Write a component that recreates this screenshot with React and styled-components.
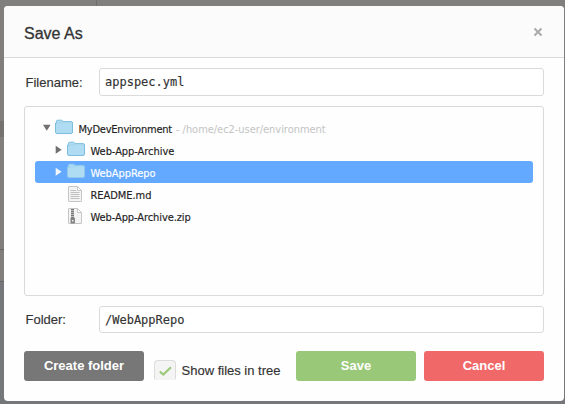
import React from 'react';
import styled, { createGlobalStyle } from 'styled-components';

const GlobalStyle = createGlobalStyle`
  * { box-sizing: border-box; }
  body { margin: 0; overflow: hidden; font-family: "Liberation Sans", Arial, sans-serif; color: #333; }
`;

const Backdrop = styled.div`
  width: 565px;
  height: 404px;
  padding: 6px 1px 3px 4px;
  background:
    linear-gradient(#6e6e6e, #6e6e6e) 96px 0 / 1px 6px no-repeat,
    linear-gradient(#757371, #757371) 0 121px / 4px 16px no-repeat,
    linear-gradient(#656565, #656565) 0 249px / 4px 1px no-repeat,
    linear-gradient(#656565, #656565) 0 281px / 4px 1px no-repeat,
    linear-gradient(#807f7e 0 281px, #75777b 281px);
`;

const Dialog = styled.section`
  display: flex;
  flex-direction: column;
  height: 395px;
  background: #fefefe;
  border-radius: 4px;
  overflow: hidden;
`;

const Header = styled.header`
  display: flex;
  align-items: center;
  justify-content: space-between;
  height: 52px;
  padding: 2px 21px 0 20px;
  background: #fbfbfb;
  border-bottom: 1px solid #dadada;
`;

const Title = styled.h1`
  margin: 0;
  padding-top: 2px;
  font-size: 16px;
  line-height: 20px;
  font-weight: 400;
  letter-spacing: 0;
  -webkit-text-stroke: 0.3px #333;
`;

const CloseButton = styled.button`
  display: flex;
  padding: 0;
  margin-top: -1px;
  border: 0;
  background: none;
`;

const Body = styled.div`
  display: flex;
  flex-direction: column;
  gap: 10px;
  padding: 10px 20px 0;
`;

const Field = styled.label`
  display: grid;
  grid-template-columns: 73.5px 445px;
  align-items: center;
  height: ${(p) => p.$height}px;
  padding-left: 1.5px;
  font-size: 13px;
  white-space: nowrap;
  -webkit-text-stroke: 0.15px #333;
`;

const Input = styled.input`
  width: 445px;
  height: 100%;
  padding: 0 5px;
  border: 1px solid #dadada;
  border-radius: 3px;
  outline: 0;
  background: #fff;
  color: #333;
  font: 12px "DejaVu Sans Mono", monospace;
`;

const Tree = styled.div`
  height: 190px;
  padding: 10px;
  border: 1px solid #dadada;
  border-radius: 3px;
  font: 11px/22px "DejaVu Sans Condensed", "DejaVu Sans", sans-serif;
  font-stretch: condensed;
`;

const TreeRow = styled.div`
  display: flex;
  align-items: center;
  height: 22px;
  padding-left: ${(p) => (p.$nested ? 19 : 7)}px;
  border-radius: 3px;
  background: ${(p) => (p.$selected ? '#63a9ff' : 'transparent')};
  color: ${(p) => (p.$selected ? '#fff' : '#222')};
`;

const ArrowSlot = styled.span`
  display: flex;
  width: 13px;
  height: 22px;
  padding-top: 6px;
  color: ${(p) => (p.$selected ? '#f4f7fb' : '#707070')};
`;

const IconSlot = styled.span`
  display: flex;
  width: 23px;
  height: 22px;
  padding-top: 2px;
`;

const Name = styled.span`
  padding: 3px 0 0 0.5px;
  letter-spacing: ${(p) => p.$tracking}px;
  white-space: nowrap;
  -webkit-text-stroke: 0.15px currentColor;
`;

const PathText = styled.span`
  padding: 3px 0 0 4px;
  color: #c4c4c4;
  letter-spacing: -0.04px;
`;

const Footer = styled.footer`
  display: flex;
  align-items: flex-start;
  padding-top: 8px;
`;

const Button = styled.button`
  width: 120px;
  height: 30px;
  padding: 0;
  border: 0;
  border-radius: 3px;
  margin-left: ${(p) => p.$gap || 0}px;
  background: ${(p) => p.$color};
  color: #fff;
  font: bold 13px/28px "Liberation Sans", Arial, sans-serif;
`;

const CheckLabel = styled.label`
  display: flex;
  width: 142px;
  margin-left: 10px;
  padding-top: 9px;
  font-size: 13px;
  line-height: 21px;
  white-space: nowrap;
  -webkit-text-stroke: 0.15px #333;
`;

const CheckBox = styled.span`
  display: flex;
  width: 22px;
  height: 20px;
  margin-right: 5.5px;
  border: 1px solid #dcdcdc;
  border-width: 1px 1px 0;
  border-radius: 4px 4px 2px 2px;
  background: #f4f4f4;
`;

const Arrow = ({ open }) => (
  <svg width="9" height="10" viewBox="0 0 9 10">
    <path d={open ? 'M1 1.7H8.6L4.8 7.7Z' : 'M1.7 0.7V8.7L7.6 4.7Z'} fill="currentColor" />
  </svg>
);

const Folder = ({ selected }) => (
  <svg width="19" height="16" viewBox="0 0 19 16">
    <path
      d="M1.5 4V2.2Q1.5 1.2 2.5 1.2H6.5Q7.5 1.2 7.8 2.5H16Q17.5 2.5 17.5 4V13Q17.5 14.5 16 14.5H2Q0.5 14.5 0.5 13V4Z"
      fill="#afdcf2"
      stroke={selected ? '#91c9ee' : '#7bbedc'}
    />
    <path d="M1 4H7.2L8 3H17" fill="none" stroke={selected ? '#9ad0ee' : '#9bd0e8'} strokeWidth=".7" />
  </svg>
);

const FileIcon = ({ zip }) => (
  <svg width="17" height="18" viewBox="0 0 17 18">
    <path d="M2 1.5H10.5L14.5 5.5V16Q14.5 16.5 14 16.5H2Q1.5 16.5 1.5 16V2Q1.5 1.5 2 1.5Z" fill="#f4f4f4" stroke="#c5c5c5" />
    <path d="M10.5 1.5V5.5H14.5Z" fill="#fff" stroke="#c8c8c8" />
    {zip ? (
      <>
        <path d="M5.5 2V11" stroke="#bbb" strokeWidth="3" />
        <path d="M5.5 2V11" stroke="#777" strokeWidth="3" strokeDasharray="1 1" />
        <rect x="3.5" y="10.5" width="4.5" height="6" rx="1" fill="#858585" />
        <rect x="5" y="13" width="1.5" height="1.5" fill="#eee" />
      </>
    ) : (
      <path d="M3.5 5.5H9M3.5 7.5H12.5M3.5 9.5H12.5M3.5 11.5H12.5M3.5 13.5H12.5" stroke="#c0c0c0" />
    )}
  </svg>
);

const items = [
  { name: 'MyDevEnvironment', root: true, tracking: -0.23, path: '- /home/ec2-user/environment' },
  { name: 'Web-App-Archive', tracking: -0.05 },
  { name: 'WebAppRepo', selected: true, tracking: -0.06 },
  { name: 'README.md', file: true, tracking: -0.05 },
  { name: 'Web-App-Archive.zip', file: true, zip: true, tracking: -0.09 },
];

export default function App() {
  return (
    <>
      <GlobalStyle />
      <Backdrop>
        <Dialog role="dialog" aria-label="Save As">
          <Header>
            <Title>Save As</Title>
            <CloseButton aria-label="Close">
              <svg width="10" height="10" viewBox="0 0 10 10">
                <path d="M1.5 1.5L8.5 8.5M8.5 1.5L1.5 8.5" stroke="#aaa" strokeWidth="2" />
              </svg>
            </CloseButton>
          </Header>
          <Body>
            <Field $height={28}>
              Filename:
              <Input defaultValue="appspec.yml" />
            </Field>
            <Tree>
              {items.map((item) => (
                <TreeRow key={item.name} $nested={!item.root} $selected={item.selected}>
                  <ArrowSlot $selected={item.selected}>{!item.file && <Arrow open={item.root} />}</ArrowSlot>
                  <IconSlot>
                    {item.file ? <FileIcon zip={item.zip} /> : <Folder selected={item.selected} />}
                  </IconSlot>
                  <Name $tracking={item.tracking}>{item.name}</Name>
                  {item.path && <PathText>{item.path}</PathText>}
                </TreeRow>
              ))}
            </Tree>
            <Field $height={27}>
              Folder:
              <Input defaultValue="/WebAppRepo" />
            </Field>
            <Footer>
              <Button $color="#777777">Create folder</Button>
              <CheckLabel>
                <CheckBox>
                  <svg width="20" height="20" viewBox="0 0 20 20">
                    <path d="M4.8 10.5L8.3 13.5L16 6.3" fill="none" stroke="#9bc87a" strokeWidth="2.2" />
                  </svg>
                </CheckBox>
                Show files in tree
              </CheckLabel>
              <Button $color="#9ac879">Save</Button>
              <Button $color="#f06868" $gap={8}>Cancel</Button>
            </Footer>
          </Body>
        </Dialog>
      </Backdrop>
    </>
  );
}
